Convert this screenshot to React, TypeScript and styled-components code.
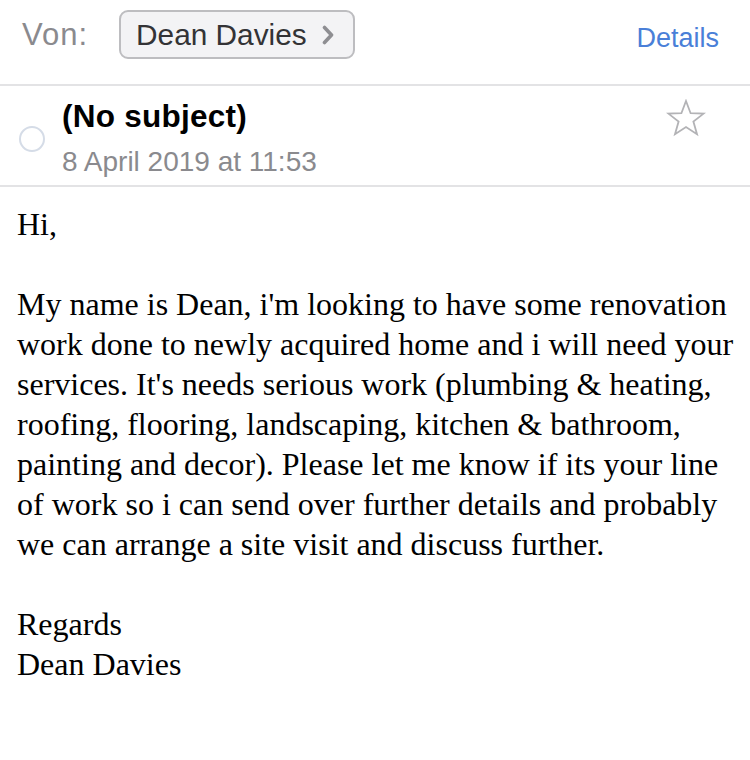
import React from "react";
import styled, { createGlobalStyle } from "styled-components";

const Global = createGlobalStyle`
  html, body { margin: 0; padding: 0; background: #ffffff; }
  body { width: 750px; height: 760px; overflow: hidden; }
`;

const Page = styled.div`
  width: 750px;
  height: 760px;
  background: #fff;
  display: flex;
  flex-direction: column;
`;

const HeaderRow = styled.div`
  height: 86px;
  display: flex;
  align-items: flex-start;
  padding: 10px 31px 0 22px;
  box-sizing: border-box;
  border-bottom: 2px solid #e3e3e5;
  font-family: "Liberation Sans", Arial, sans-serif;
`;

const FromLabel = styled.span`
  font-size: 31px;
  color: #8a8a8e;
  margin-top: 7px;
  letter-spacing: 1px;
`;

const SenderPill = styled.div`
  margin-left: 31px;
  height: 49px;
  box-sizing: border-box;
  border: 2px solid #bdbdc0;
  border-radius: 9px;
  background: #f3f3f5;
  display: flex;
  align-items: center;
  padding: 0 19px 0 15px;
  gap: 15px;
  font-size: 29.8px;
  color: #333336;
`;

const DetailsLink = styled.span`
  margin-left: auto;
  margin-top: 13px;
  font-size: 27px;
  color: #4a7fd8;
`;

const SubjectRow = styled.div`
  height: 101px;
  box-sizing: border-box;
  border-bottom: 2px solid #e3e3e5;
  display: flex;
  align-items: flex-start;
  padding: 0 44px 0 19px;
  font-family: "Liberation Sans", Arial, sans-serif;
`;

const ReadDot = styled.div`
  width: 26px;
  height: 26px;
  box-sizing: border-box;
  border-radius: 50%;
  border: 2px solid #d5dce7;
  margin-top: 40px;
`;

const SubjectText = styled.div`
  margin-left: 17px;
  display: flex;
  flex-direction: column;
  padding-top: 12px;
`;

const Subject = styled.div`
  font-size: 31.5px;
  font-weight: bold;
  color: #000;
  line-height: 36px;
  letter-spacing: 0.25px;
`;

const DateLine = styled.div`
  margin-top: 13px;
  font-size: 28px;
  color: #8a8a8e;
  line-height: 30px;
`;

const StarIcon = styled.svg`
  margin-left: auto;
  margin-top: 13px;
  width: 40px;
  height: 38px;
`;

const Body = styled.div`
  padding: 17px 10px 0 17px;
  font-family: "Liberation Serif", "Times New Roman", serif;
  font-size: 32px;
  line-height: 40px;
  color: #000;
`;

const Para = styled.p`
  margin: 0 0 40px 0;
`;

const Line = styled.span`
  display: block;
  white-space: nowrap;
`;

const message = [
  "My name is Dean, i'm looking to have some renovation",
  "work done to newly acquired home and i will need your",
  "services. It's needs serious work (plumbing & heating,",
  "roofing, flooring, landscaping, kitchen & bathroom,",
  "painting and decor). Please let me know if its your line",
  "of work so i can send over further details and probably",
  "we can arrange a site visit and discuss further.",
];

export default function App() {
  return (
    <Page>
      <Global />
      <HeaderRow>
        <FromLabel>Von:</FromLabel>
        <SenderPill>
          <span>Dean Davies</span>
          <svg width="12" height="20" viewBox="0 0 12 20">
            <polyline points="2.5,2.5 9.5,10 2.5,17.5" fill="none" stroke="#8e8e92" strokeWidth="3.6" strokeLinecap="round" strokeLinejoin="round" />
          </svg>
        </SenderPill>
        <DetailsLink>Details</DetailsLink>
      </HeaderRow>
      <SubjectRow>
        <ReadDot />
        <SubjectText>
          <Subject>(No subject)</Subject>
          <DateLine>8 April 2019 at 11:53</DateLine>
        </SubjectText>
        <StarIcon viewBox="0 0 40 38">
          <polygon
            points="20,2 24.6,14.2 37.6,14.6 27.4,22.6 31,35.2 20,28 9,35.2 12.6,22.6 2.4,14.6 15.4,14.2"
            fill="none"
            stroke="#b3b3b6"
            strokeWidth="1.8"
            strokeLinejoin="miter"
          />
        </StarIcon>
      </SubjectRow>
      <Body>
        <Para>Hi,</Para>
        <Para>
          {message.map((l, i) => (
            <Line key={i}>{l}</Line>
          ))}
        </Para>
        <Para>
          <Line>Regards</Line>
          <Line>Dean Davies</Line>
        </Para>
      </Body>
    </Page>
  );
}
